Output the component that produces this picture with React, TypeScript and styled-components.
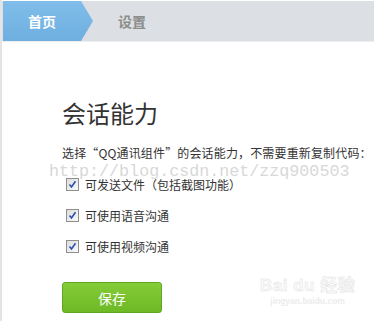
import React from "react";
import styled, { createGlobalStyle } from "styled-components";

const Global = createGlobalStyle`
  html, body { margin: 0; padding: 0; background: #fff; }
  body { font-family: "Noto Sans CJK SC", "Noto Sans", sans-serif; }
`;

const Page = styled.div`
  position: relative;
  width: 372px;
  height: 321px;
  border-left: 2px solid #e4e4e4;
  overflow: hidden;
  background: #fff;
`;

const NavBar = styled.div`
  margin-top: 1px;
  height: 40px;
  background: #dcdfe3;
  display: flex;
  align-items: stretch;
  border-bottom: 1px solid #eceef0;
`;

const Tab = styled.div<{ $active?: boolean }>`
  display: flex;
  align-items: center;
  font-size: 14px;
  font-weight: bold;
  color: ${(p) => (p.$active ? "#fff" : "#8c8c8c")};
  ${(p) =>
    p.$active
      ? `
    width: 90px;
    margin-left: 1px;
    padding-left: 25px;
    box-sizing: border-box;
    background: linear-gradient(180deg, #80bdea 0%, #6eafe0 100%);
    clip-path: polygon(0 0, 78px 0, 90px 50%, 78px 100%, 0 100%);
  `
      : `
    padding-left: 25px;
  `}
`;

const Content = styled.div`
  padding: 54px 0 0 60px;
`;

const Title = styled.h1`
  margin: 0;
  font-size: 24px;
  font-weight: normal;
  line-height: 34px;
  color: #333;
`;

const Desc = styled.p`
  margin: 14px 0 0 0;
  font-size: 12px;
  line-height: 18px;
  color: #333;
  white-space: nowrap;
  letter-spacing: 0.15px;
`;

const Options = styled.div`
  margin-top: 13px;
  display: flex;
  flex-direction: column;
  gap: 13px;
`;

const Option = styled.label`
  display: flex;
  align-items: center;
  gap: 6px;
  padding-left: 4px;
  height: 18px;
  font-size: 12px;
  color: #333;
`;

const Box = styled.span`
  width: 11px;
  height: 11px;
  border: 1px solid #8e8f8f;
  background: linear-gradient(135deg, #dcdcdc 0%, #fafafa 100%);
  display: flex;
  align-items: center;
  justify-content: center;
`;

const SaveButton = styled.button`
  margin-top: 27px;
  width: 100px;
  height: 31px;
  border: 1px solid #5ea81f;
  border-radius: 3px;
  background: linear-gradient(180deg, #84cc38 0%, #6db925 100%);
  color: #fff;
  font-family: inherit;
  font-size: 14px;
  cursor: pointer;
`;

const Watermark = styled.div`
  position: absolute;
  left: 47px;
  top: 162px;
  font-family: "Liberation Mono", monospace;
  font-size: 16.7px;
  color: #d8d8d8;
  pointer-events: none;
  white-space: nowrap;
`;

const Baidu = styled.div`
  position: absolute;
  left: 258px;
  top: 277px;
  display: flex;
  flex-direction: column;
  align-items: center;
  pointer-events: none;
`;

const BaiduLogo = styled.div`
  font-family: "Liberation Sans", "Noto Sans CJK SC", sans-serif;
  font-size: 17px;
  font-weight: bold;
  line-height: 18px;
  letter-spacing: 0.5px;
  -webkit-text-stroke: 0.5px #e2e2e2;
  color: #fbfbfb;
`;

const BaiduUrl = styled.div`
  font-family: "Liberation Sans", sans-serif;
  font-size: 8.5px;
  line-height: 12px;
  color: #ececec;
  font-weight: bold;
`;

const Check = () => (
  <svg width="9" height="9" viewBox="0 0 9 9">
    <path d="M1.5 4.5 L3.5 7 L7.5 1.2" fill="none" stroke="#2a4fb0" strokeWidth="1.6" />
  </svg>
);

const options = ["可发送文件（包括截图功能）", "可使用语音沟通", "可使用视频沟通"];

export default function App() {
  return (
    <>
      <Global />
      <Page>
        <NavBar>
          <Tab $active>首页</Tab>
          <Tab>设置</Tab>
        </NavBar>
        <Content>
          <Title>会话能力</Title>
          <Desc>选择“QQ通讯组件”的会话能力，不需要重新复制代码：</Desc>
          <Options>
            {options.map((o) => (
              <Option key={o}>
                <Box>
                  <Check />
                </Box>
                {o}
              </Option>
            ))}
          </Options>
          <SaveButton>保存</SaveButton>
        </Content>
        <Watermark>http://blog.csdn.net/zzq900503</Watermark>
        <Baidu>
          <BaiduLogo>Bai du 经验</BaiduLogo>
          <BaiduUrl>jingyan.baidu.com</BaiduUrl>
        </Baidu>
      </Page>
    </>
  );
}
